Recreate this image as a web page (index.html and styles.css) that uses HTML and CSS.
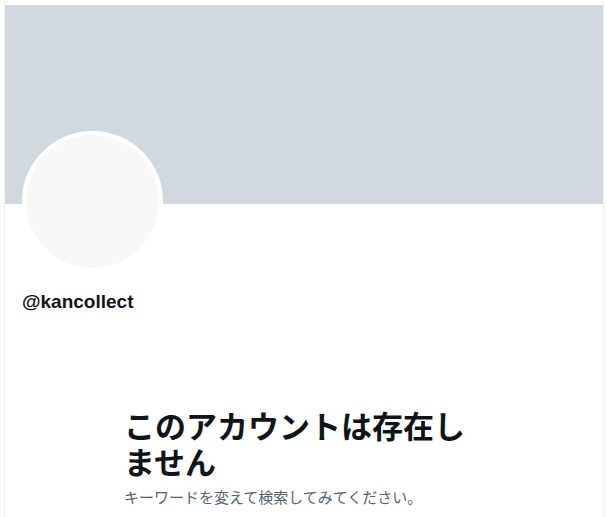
FILE: index.html
```html
<!DOCTYPE html>
<html lang="ja">
<head>
<meta charset="utf-8">
<title>@kancollect</title>
<link rel="stylesheet" href="styles.css">
</head>
<body>
<main class="column">
  <div class="banner"></div>
  <section class="profile">
    <div class="avatar"></div>
    <div class="handle">@kancollect</div>
  </section>
  <section class="empty">
    <h1 class="empty-title">このアカウントは存在しません</h1>
    <p class="empty-text">キーワードを変えて検索してみてください。</p>
  </section>
</main>
</body>
</html>
```
FILE: styles.css
```css
html, body {
  margin: 0;
  padding: 0;
  background: #ffffff;
}

body {
  font-family: "Liberation Sans", "Noto Sans CJK JP", sans-serif;
  color: #0f1419;
}

.column {
  box-sizing: border-box;
  width: 600px;
  margin-left: 4px;
  min-height: 100vh;
  padding-top: 5px;
  border-left: 1px solid #eff3f4;
  border-right: 1px solid #eff3f4;
}

.banner {
  height: 199px;
  background: #cfd9de;
}

.profile {
  padding: 0 17px;
}

.avatar {
  box-sizing: border-box;
  width: 141px;
  height: 141px;
  margin-top: -73px;
  border: 4px solid #ffffff;
  border-radius: 50%;
  background: #f7f9f9;
}

.handle {
  margin-top: 18px;
  font-size: 19px;
  line-height: 24px;
  font-weight: 700;
  color: #0f1419;
}

.empty {
  box-sizing: border-box;
  max-width: 400px;
  margin: 93px auto 0;
  padding: 0 20px;
}

.empty-title {
  margin: 0 0 8px;
  font-family: "Noto Sans CJK JP", sans-serif;
  font-size: 31px;
  line-height: 36px;
  font-weight: 700;
  color: #0f1419;
}

.empty-text {
  margin: 0;
  font-family: "Noto Sans CJK JP", sans-serif;
  font-size: 15px;
  line-height: 20px;
  color: #536471;
}
```
